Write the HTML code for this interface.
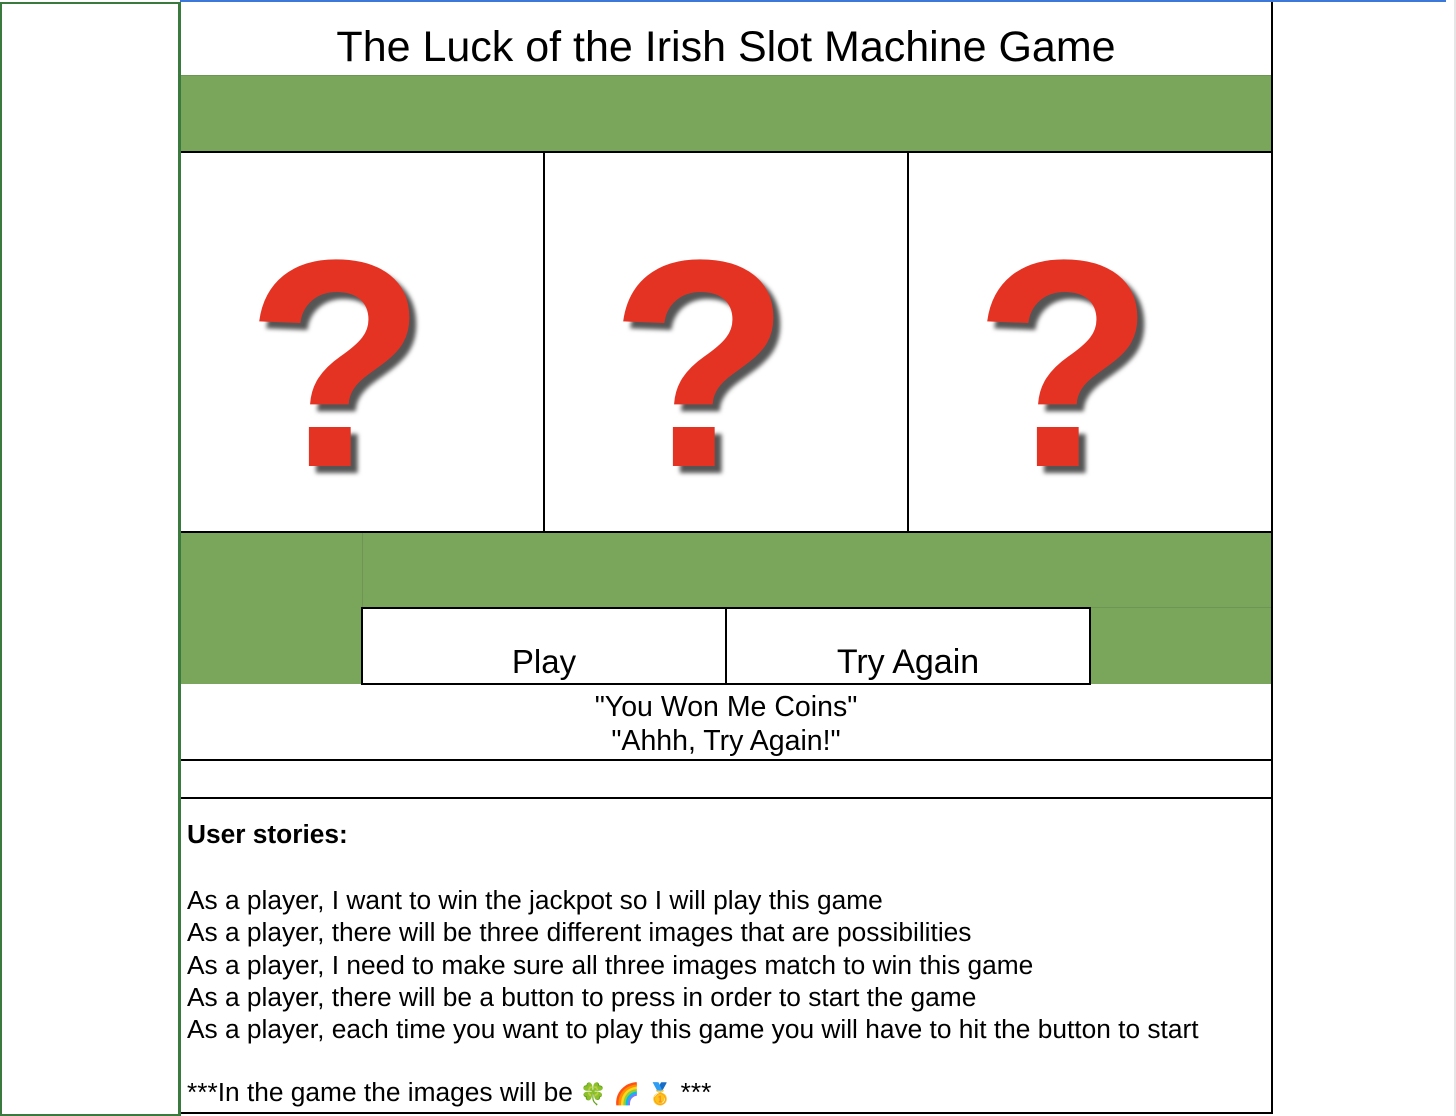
<!DOCTYPE html>
<html><head><meta charset="utf-8"><style>
body{margin:0;width:1456px;height:1116px;position:relative;background:#fff;font-family:"Liberation Sans",Arial,sans-serif;overflow:hidden;color:#000}
.a{position:absolute}
.g{background:#79a65b}
.q{position:absolute;top:216px;width:362px;text-align:center;font-weight:bold;font-size:296px;line-height:1;color:#e53323;text-shadow:7px 7px 4px #555}
.t{position:absolute;white-space:nowrap}
.e{font-size:21px}
</style></head><body>
<div class="a" style="left:180px;top:0;width:1266px;height:2px;background:#3b78d8"></div>
<div class="a" style="left:0;top:2px;height:1110px;border:2px solid #3a7a3f;border-right-width:3px;box-sizing:content-box;width:176px"></div>
<div class="a" style="left:1454px;top:0;width:2px;height:1116px;background:#e6e6e6"></div>
<div class="a" style="left:1271px;top:2px;width:2px;height:1112px;background:#000"></div>
<div class="t" style="left:181px;width:1090px;top:23px;text-align:center;font-size:43px">The Luck of the Irish Slot Machine Game</div>
<div class="a g" style="left:181px;top:75px;width:1090px;height:76px;border-top:1px solid #6d9652"></div>
<div class="a" style="left:181px;top:151px;width:1090px;height:2px;background:#000"></div>
<div class="a" style="left:543px;top:153px;width:2px;height:378px;background:#000"></div>
<div class="a" style="left:907px;top:153px;width:2px;height:378px;background:#000"></div>
<div class="q" style="left:155px">?</div>
<div class="q" style="left:519px">?</div>
<div class="q" style="left:883px">?</div>
<div class="a" style="left:181px;top:531px;width:1090px;height:2px;background:#000"></div>
<div class="a g" style="left:181px;top:533px;width:1090px;height:151px"></div>
<div class="a" style="left:362px;top:533px;width:1px;height:74px;background:#6d9652"></div>
<div class="a" style="left:362px;top:607px;width:909px;height:1px;background:#6d9652"></div>
<div class="a" style="left:361px;top:607px;width:730px;height:78px;border:2px solid #000;box-sizing:border-box;background:#fff"></div>
<div class="a" style="left:725px;top:607px;width:2px;height:78px;background:#000"></div>
<div class="t" style="left:361px;width:366px;top:643px;text-align:center;font-size:33px">Play</div>
<div class="t" style="left:726px;width:364px;top:643px;text-align:center;font-size:34px">Try Again</div>
<div class="t" style="left:181px;width:1090px;top:690px;text-align:center;font-size:28.5px;line-height:34px">"You Won Me Coins"<br>"Ahhh, Try Again!"</div>
<div class="a" style="left:181px;top:759px;width:1090px;height:2px;background:#000"></div>
<div class="a" style="left:181px;top:797px;width:1090px;height:2px;background:#000"></div>
<div class="t" style="left:187px;top:819px;font-size:26.3px;font-weight:bold">User stories:</div>
<div class="t" style="left:187px;top:884px;font-size:26.3px;line-height:32.3px">As a player, I want to win the jackpot so I will play this game<br>As a player, there will be three different images that are possibilities<br>As a player, I need to make sure all three images match to win this game<br>As a player, there will be a button to press in order to start the game<br>As a player, each time you want to play this game you will have to hit the button to start</div>
<div class="t" style="left:187px;top:1077px;font-size:26.3px;font-family:'Liberation Sans','Noto Sans CJK JP',sans-serif">***In the game the images will be <span class="e">🍀</span> <span class="e">🌈</span> <span class="e">🥇</span> ***</div>
<div class="a" style="left:181px;top:1112px;width:1092px;height:2px;background:#000"></div>
</body></html>
